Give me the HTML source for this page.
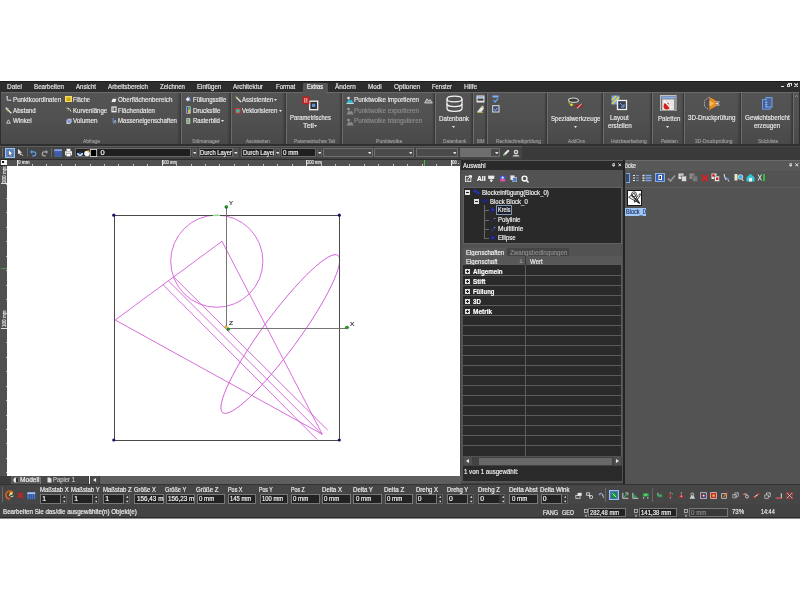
<!DOCTYPE html>
<html><head><meta charset="utf-8"><title>CAD</title>
<style>
html,body{margin:0;padding:0;background:#fff;}
body{width:800px;height:600px;position:relative;overflow:hidden;font-family:"Liberation Sans",sans-serif;}
#a div,#a span,#a svg{position:absolute;display:block;}
#a span{white-space:nowrap;line-height:1;-webkit-text-stroke:0.18px;}
#a{position:absolute;left:0;top:0;width:800px;height:600px;overflow:hidden;will-change:transform;}
</style></head><body><div id="a">
<div style="left:0px;top:81px;width:800px;height:437px;background:#454545;"></div>
<div style="left:0px;top:81px;width:800px;height:11px;background:#2d2d2d;"></div>
<div style="left:0px;top:81px;width:800px;height:1px;background:#1c1c1c;"></div>
<div style="left:302.5px;top:82.5px;width:25.5px;height:10px;background:#545454;border-radius:1.5px 1.5px 0 0;"></div>
<span style="left:7px;top:83.28px;font-size:7.2px;color:#e8e8e8;transform:scaleX(0.892);transform-origin:0 0;">Datei</span>
<span style="left:33.75px;top:83.28px;font-size:7.2px;color:#e8e8e8;transform:scaleX(0.861);transform-origin:0 0;">Bearbeiten</span>
<span style="left:75.75px;top:83.28px;font-size:7.2px;color:#e8e8e8;transform:scaleX(0.847);transform-origin:0 0;">Ansicht</span>
<span style="left:108px;top:83.28px;font-size:7.2px;color:#e8e8e8;transform:scaleX(0.869);transform-origin:0 0;">Arbeitsbereich</span>
<span style="left:160px;top:83.28px;font-size:7.2px;color:#e8e8e8;transform:scaleX(0.844);transform-origin:0 0;">Zeichnen</span>
<span style="left:197px;top:83.28px;font-size:7.2px;color:#e8e8e8;transform:scaleX(0.853);transform-origin:0 0;">Einfügen</span>
<span style="left:233.25px;top:83.28px;font-size:7.2px;color:#e8e8e8;transform:scaleX(0.872);transform-origin:0 0;">Architektur</span>
<span style="left:275.75px;top:83.28px;font-size:7.2px;color:#e8e8e8;transform:scaleX(0.844);transform-origin:0 0;">Format</span>
<span style="left:335px;top:83.28px;font-size:7.2px;color:#e8e8e8;transform:scaleX(0.894);transform-origin:0 0;">Ändern</span>
<span style="left:367.5px;top:83.28px;font-size:7.2px;color:#e8e8e8;transform:scaleX(0.881);transform-origin:0 0;">Modi</span>
<span style="left:393.75px;top:83.28px;font-size:7.2px;color:#e8e8e8;transform:scaleX(0.898);transform-origin:0 0;">Optionen</span>
<span style="left:431.75px;top:83.28px;font-size:7.2px;color:#e8e8e8;transform:scaleX(0.819);transform-origin:0 0;">Fenster</span>
<span style="left:463.75px;top:83.28px;font-size:7.2px;color:#e8e8e8;transform:scaleX(0.920);transform-origin:0 0;">Hilfe</span>
<div style="left:780.7px;top:85.7px;width:3.6px;height:1.7px;background:#e8e8e8;"></div>
<div style="left:786.8px;top:83.8px;width:3.6px;height:3.5px;background:transparent;border:1px solid #d8d8d8;box-sizing:border-box;"></div>
<div style="left:788px;top:82.8px;width:3.5px;height:3.5px;background:transparent;border:1px solid #d8d8d8;border-width:1px 1px 0 0;box-sizing:border-box;"></div>
<svg style="left:794px;top:83px" width="4.400" height="4.400"><path d="M.4.400l3.600 3.600M4 .4L.4 4" stroke="#f4f4f4" stroke-width="1.100"/></svg>
<div style="left:302.5px;top:82.5px;width:25.5px;height:10px;background:#545454;border-radius:1.5px 1.5px 0 0;"></div>
<span style="left:307px;top:83.28px;font-size:7.2px;color:#ffffff;transform:scaleX(0.784);transform-origin:0 0;">Extras</span>
<div style="left:0px;top:92px;width:800px;height:54.3px;background:#2f2f2f;"></div>
<div style="left:0.8px;top:92px;width:798.4px;height:52px;background:linear-gradient(#545454,#505050 55%,#494949);"></div>
<div style="left:0.8px;top:92px;width:798.4px;height:0.8px;background:#6a6a6a;"></div>
<div style="left:303.3px;top:91.5px;width:24px;height:1.4px;background:#545454;"></div>
<span style="left:82.5px;top:138.80px;font-size:5.8px;color:#9a9a9a;transform:scaleX(0.837);transform-origin:0 0;">Abfrage</span>
<div style="left:177.4px;top:92.8px;width:2.6px;height:51.2px;background:linear-gradient(90deg,rgba(0,0,0,0),rgba(0,0,0,0.22));"></div>
<div style="left:179.6px;top:92.8px;width:1px;height:51.2px;background:#393939;"></div>
<div style="left:180.6px;top:92.8px;width:0.8px;height:51.2px;background:#6c6c6c;"></div>
<span style="left:191.5px;top:138.80px;font-size:5.8px;color:#9a9a9a;transform:scaleX(0.889);transform-origin:0 0;">Stilmanager</span>
<div style="left:227.4px;top:92.8px;width:2.6px;height:51.2px;background:linear-gradient(90deg,rgba(0,0,0,0),rgba(0,0,0,0.22));"></div>
<div style="left:229.6px;top:92.8px;width:1px;height:51.2px;background:#393939;"></div>
<div style="left:230.6px;top:92.8px;width:0.8px;height:51.2px;background:#6c6c6c;"></div>
<span style="left:246.25px;top:138.80px;font-size:5.8px;color:#9a9a9a;transform:scaleX(0.792);transform-origin:0 0;">Assistenten</span>
<div style="left:282.4px;top:92.8px;width:2.6px;height:51.2px;background:linear-gradient(90deg,rgba(0,0,0,0),rgba(0,0,0,0.22));"></div>
<div style="left:284.6px;top:92.8px;width:1px;height:51.2px;background:#393939;"></div>
<div style="left:285.6px;top:92.8px;width:0.8px;height:51.2px;background:#6c6c6c;"></div>
<span style="left:293.75px;top:138.80px;font-size:5.8px;color:#9a9a9a;transform:scaleX(0.817);transform-origin:0 0;">Parametrisches Teil</span>
<div style="left:338.65px;top:92.8px;width:2.6px;height:51.2px;background:linear-gradient(90deg,rgba(0,0,0,0),rgba(0,0,0,0.22));"></div>
<div style="left:340.85px;top:92.8px;width:1px;height:51.2px;background:#393939;"></div>
<div style="left:341.85px;top:92.8px;width:0.8px;height:51.2px;background:#6c6c6c;"></div>
<span style="left:376.25px;top:138.80px;font-size:5.8px;color:#9a9a9a;transform:scaleX(0.885);transform-origin:0 0;">Punktwolke</span>
<div style="left:431.65px;top:92.8px;width:2.6px;height:51.2px;background:linear-gradient(90deg,rgba(0,0,0,0),rgba(0,0,0,0.22));"></div>
<div style="left:433.85px;top:92.8px;width:1px;height:51.2px;background:#393939;"></div>
<div style="left:434.85px;top:92.8px;width:0.8px;height:51.2px;background:#6c6c6c;"></div>
<span style="left:443px;top:138.80px;font-size:5.8px;color:#9a9a9a;transform:scaleX(0.829);transform-origin:0 0;">Datenbank</span>
<div style="left:469.9px;top:92.8px;width:2.6px;height:51.2px;background:linear-gradient(90deg,rgba(0,0,0,0),rgba(0,0,0,0.22));"></div>
<div style="left:472.1px;top:92.8px;width:1px;height:51.2px;background:#393939;"></div>
<div style="left:473.1px;top:92.8px;width:0.8px;height:51.2px;background:#6c6c6c;"></div>
<span style="left:477px;top:138.80px;font-size:5.8px;color:#9a9a9a;transform:scaleX(0.727);transform-origin:0 0;">BIM</span>
<div style="left:483.65px;top:92.8px;width:2.6px;height:51.2px;background:linear-gradient(90deg,rgba(0,0,0,0),rgba(0,0,0,0.22));"></div>
<div style="left:485.85px;top:92.8px;width:1px;height:51.2px;background:#393939;"></div>
<div style="left:486.85px;top:92.8px;width:0.8px;height:51.2px;background:#6c6c6c;"></div>
<span style="left:495.5px;top:138.80px;font-size:5.8px;color:#9a9a9a;transform:scaleX(0.841);transform-origin:0 0;">Rechtschreibprüfung</span>
<div style="left:543.65px;top:92.8px;width:2.6px;height:51.2px;background:linear-gradient(90deg,rgba(0,0,0,0),rgba(0,0,0,0.22));"></div>
<div style="left:545.85px;top:92.8px;width:1px;height:51.2px;background:#393939;"></div>
<div style="left:546.85px;top:92.8px;width:0.8px;height:51.2px;background:#6c6c6c;"></div>
<span style="left:567.5px;top:138.80px;font-size:5.8px;color:#9a9a9a;transform:scaleX(0.811);transform-origin:0 0;">AddOns</span>
<div style="left:599.9px;top:92.8px;width:2.6px;height:51.2px;background:linear-gradient(90deg,rgba(0,0,0,0),rgba(0,0,0,0.22));"></div>
<div style="left:602.1px;top:92.8px;width:1px;height:51.2px;background:#393939;"></div>
<div style="left:603.1px;top:92.8px;width:0.8px;height:51.2px;background:#6c6c6c;"></div>
<span style="left:611.25px;top:138.80px;font-size:5.8px;color:#9a9a9a;transform:scaleX(0.846);transform-origin:0 0;">Holzbearbeitung</span>
<div style="left:648.65px;top:92.8px;width:2.6px;height:51.2px;background:linear-gradient(90deg,rgba(0,0,0,0),rgba(0,0,0,0.22));"></div>
<div style="left:650.85px;top:92.8px;width:1px;height:51.2px;background:#393939;"></div>
<div style="left:651.85px;top:92.8px;width:0.8px;height:51.2px;background:#6c6c6c;"></div>
<span style="left:660.75px;top:138.80px;font-size:5.8px;color:#9a9a9a;transform:scaleX(0.787);transform-origin:0 0;">Paletten</span>
<div style="left:681.15px;top:92.8px;width:2.6px;height:51.2px;background:linear-gradient(90deg,rgba(0,0,0,0),rgba(0,0,0,0.22));"></div>
<div style="left:683.35px;top:92.8px;width:1px;height:51.2px;background:#393939;"></div>
<div style="left:684.35px;top:92.8px;width:0.8px;height:51.2px;background:#6c6c6c;"></div>
<span style="left:694.5px;top:138.80px;font-size:5.8px;color:#9a9a9a;transform:scaleX(0.849);transform-origin:0 0;">3D-Druckprüfung</span>
<div style="left:737.4px;top:92.8px;width:2.6px;height:51.2px;background:linear-gradient(90deg,rgba(0,0,0,0),rgba(0,0,0,0.22));"></div>
<div style="left:739.6px;top:92.8px;width:1px;height:51.2px;background:#393939;"></div>
<div style="left:740.6px;top:92.8px;width:0.8px;height:51.2px;background:#6c6c6c;"></div>
<span style="left:758px;top:138.80px;font-size:5.8px;color:#9a9a9a;transform:scaleX(0.806);transform-origin:0 0;">Stückliste</span>
<div style="left:789.9px;top:92.8px;width:2.6px;height:51.2px;background:linear-gradient(90deg,rgba(0,0,0,0),rgba(0,0,0,0.22));"></div>
<div style="left:792.1px;top:92.8px;width:1px;height:51.2px;background:#393939;"></div>
<div style="left:793.1px;top:92.8px;width:0.8px;height:51.2px;background:#6c6c6c;"></div>
<svg style="left:794.800px;top:94.500px" width="3" height="2"><path d="M0 2L1.500.3 3 2" stroke="#aaa" stroke-width=".6" fill="none"/></svg>
<span style="left:13px;top:95.78px;font-size:7.2px;color:#e8e8e8;transform:scaleX(0.861);transform-origin:0 0;">Punktkoordinaten</span>
<span style="left:13px;top:106.58px;font-size:7.2px;color:#e8e8e8;transform:scaleX(0.861);transform-origin:0 0;">Abstand</span>
<span style="left:13px;top:116.78px;font-size:7.2px;color:#e8e8e8;transform:scaleX(0.868);transform-origin:0 0;">Winkel</span>
<span style="left:72.5px;top:95.78px;font-size:7.2px;color:#e8e8e8;transform:scaleX(0.787);transform-origin:0 0;">Fläche</span>
<span style="left:72.5px;top:106.58px;font-size:7.2px;color:#e8e8e8;transform:scaleX(0.847);transform-origin:0 0;">Kurvenlänge</span>
<span style="left:72.5px;top:116.78px;font-size:7.2px;color:#e8e8e8;transform:scaleX(0.874);transform-origin:0 0;">Volumen</span>
<span style="left:118px;top:95.78px;font-size:7.2px;color:#e8e8e8;transform:scaleX(0.867);transform-origin:0 0;">Oberflächenbereich</span>
<span style="left:118px;top:106.58px;font-size:7.2px;color:#e8e8e8;transform:scaleX(0.848);transform-origin:0 0;">Flächendaten</span>
<span style="left:118px;top:116.78px;font-size:7.2px;color:#e8e8e8;transform:scaleX(0.842);transform-origin:0 0;">Masseneigenschaften</span>
<svg style="left:5.800px;top:96.200px" width="6" height="6"><path d="M1.200.6v3.600h3.200" stroke="#e0e4ee" stroke-width=".9" fill="none"/><rect x=".4" y=".2" width="1.500" height="1.200" fill="#c8d4f0"/><rect x="4" y="3.700" width="1.200" height="1.200" fill="#c8d4f0"/></svg>
<svg style="left:5.400px;top:106.600px" width="7" height="7"><path d="M.8.800l5.600 5.600" stroke="#ececdc" stroke-width="1.300"/><path d="M2.600.6l1.500 1.500" stroke="#5f8fe0" stroke-width="1"/><path d="M.6 2.200l3 3" stroke="#c8b040" stroke-width=".7"/></svg>
<svg style="left:6.200px;top:118.500px" width="5" height="5"><path d="M.6 4.300L2.400.8l1.900 3.500z" stroke="#dcdcdc" stroke-width=".8" fill="none"/></svg>
<div style="left:65.3px;top:96px;width:6.3px;height:6px;background:#e6c52e;border:0.6px solid #f4dc60;box-sizing:border-box;"></div>
<div style="left:67px;top:97.5px;width:3px;height:3px;background:#c9a41c;"></div>
<svg style="left:65.800px;top:106.600px" width="6" height="6"><path d="M.5 1.200c2-.5 3.500.8 4.500 3.300" stroke="#e4e4e4" stroke-width=".9" fill="none"/><path d="M1.500 3.500l1.800-1.200" stroke="#c8b040" stroke-width=".8"/></svg>
<svg style="left:65.800px;top:117.800px" width="6" height="7"><rect x=".6" y="2.500" width="3.300" height="3.300" fill="#eef0f6"/><path d="M.6 2.500l1.300-1.500h3.300v3.300l-1.300 1.500" fill="#8aa4e0" stroke="#dfe6f6" stroke-width=".5"/><rect x="1.600" y="3.400" width="1.300" height="1.300" fill="#667"/></svg>
<svg style="left:111px;top:98px" width="6" height="5"><path d="M.4 4.200L1.600.8h3.800L4.200 4.200z" fill="#f4f4f4"/><path d="M.4 4.700h3.500" stroke="#3a3a3a" stroke-width=".6"/></svg>
<svg style="left:110.800px;top:106.400px" width="6" height="7"><rect x=".4" y=".4" width="5.200" height="6" fill="#ececec"/><rect x="1.500" y="1.600" width="3" height="3.400" fill="#555"/><path d="M2.500 1.600v3.400" stroke="#ececec" stroke-width=".6"/></svg>
<svg style="left:111.800px;top:117.600px" width="5" height="6"><path d="M1.200.5v4.500h3" stroke="#6f8fd8" stroke-width="1" fill="none"/><path d="M2.300 4.200l.9-1.800.9 1.800" stroke="#e8e8e8" stroke-width=".7" fill="none"/><circle cx="1.300" cy=".9" r=".8" fill="#5f7fd0"/></svg>
<span style="left:192.5px;top:95.78px;font-size:7.2px;color:#e8e8e8;transform:scaleX(0.831);transform-origin:0 0;">Füllungsstile</span>
<span style="left:192.5px;top:106.58px;font-size:7.2px;color:#e8e8e8;transform:scaleX(0.870);transform-origin:0 0;">Druckstile</span>
<span style="left:192.5px;top:116.78px;font-size:7.2px;color:#e8e8e8;transform:scaleX(0.833);transform-origin:0 0;">Rasterbild</span>
<svg style="left:220.5px;top:120.2px" width="3" height="2"><path d="M0 0h3L1.5 2z" fill="#e8e8e8"/></svg>
<svg style="left:185.300px;top:96.200px" width="6" height="6"><path d="M.6 3.300l2.400-2.400 2.200 2.200-2.400 2.400z" fill="#e4e8f0"/><path d="M3 .6l2 1.200" stroke="#5f8fe0" stroke-width="1"/><circle cx="5" cy="4.300" r=".9" fill="#5fa0f0"/></svg>
<svg style="left:185.800px;top:106.200px" width="5" height="8"><rect x=".4" y=".4" width="4.200" height="7.200" fill="#d8dce8"/><rect x=".9" y="1" width="1.500" height="6" fill="#3a50c8"/><rect x="2.400" y="1" width="1.700" height="2.800" fill="#38a848"/><rect x="2.400" y="3.800" width="1.700" height="3.200" fill="#d8c838"/></svg>
<svg style="left:186px;top:117.800px" width="5" height="6"><rect x=".4" y=".3" width="3.800" height="5.400" fill="#e4ece4"/><rect x="1.200" y="1" width="2.200" height="4" fill="#5a9a62"/><path d="M1.200 3h2.200" stroke="#e4ece4" stroke-width=".5"/></svg>
<span style="left:242px;top:95.78px;font-size:7.2px;color:#e8e8e8;transform:scaleX(0.840);transform-origin:0 0;">Assistenten</span>
<svg style="left:274.25px;top:99.2px" width="3" height="2"><path d="M0 0h3L1.5 2z" fill="#e8e8e8"/></svg>
<span style="left:242px;top:106.58px;font-size:7.2px;color:#e8e8e8;transform:scaleX(0.853);transform-origin:0 0;">Vektorisieren</span>
<svg style="left:278.5px;top:110px" width="3" height="2"><path d="M0 0h3L1.5 2z" fill="#e8e8e8"/></svg>
<svg style="left:234.800px;top:95.800px" width="7" height="7"><path d="M1.500 1.500l4.500 4.500" stroke="#ececec" stroke-width="1.300"/><path d="M.5 1.200l1.600.6M1.300.3l.5 1.700" stroke="#e8c848" stroke-width=".7"/></svg>
<svg style="left:235px;top:107.500px" width="6" height="6"><rect x=".6" y=".6" width="4.600" height="4.600" fill="#48b8a0" stroke="#c83030" stroke-width="1.100"/></svg>
<svg style="left:302px;top:95.500px" width="17" height="15"><rect x="7.700" y="5.200" width="8" height="8.500" fill="#333" stroke="#f2f2f2" stroke-width="1.300"/><rect x="10" y="7.800" width="3.200" height="3.200" fill="#5f8fe0"/><rect x=".6" y=".5" width="6.800" height="7.800" fill="#c41e1e"/><path d="M2.800 2v4.800M4.800 2v4.800" stroke="#f4d4d4" stroke-width=".9"/></svg>
<span style="left:289.5px;top:114.38px;font-size:7.2px;color:#e8e8e8;transform:scaleX(0.820);transform-origin:0 0;">Parametrisches</span>
<span style="left:302.5px;top:121.98px;font-size:7.2px;color:#e8e8e8;transform:scaleX(1.018);transform-origin:0 0;">Teil</span>
<svg style="left:314.3px;top:125.3px" width="3" height="2"><path d="M0 0h3L1.5 2z" fill="#e8e8e8"/></svg>
<span style="left:353.75px;top:95.78px;font-size:7.2px;color:#e8e8e8;transform:scaleX(0.869);transform-origin:0 0;">Punktwolke importieren</span>
<span style="left:353.75px;top:106.58px;font-size:7.2px;color:#8c8c8c;transform:scaleX(0.869);transform-origin:0 0;">Punktwolke exportieren</span>
<span style="left:353.75px;top:116.78px;font-size:7.2px;color:#8c8c8c;transform:scaleX(0.870);transform-origin:0 0;">Punktwolke triangulieren</span>
<svg style="left:345.5px;top:95.5px" width="8" height="8"><path d="M.5 7.5L3 3l1.5 2 1.2-1.5 2 4z" fill="#30c0d8"/><circle cx="2.5" cy="2" r="1.3" fill="#e8e8e8"/><path d="M.5 7.5h7.2" stroke="#e8e8e8" stroke-width=".8"/></svg>
<svg style="left:345.5px;top:106.5px" width="8" height="8"><path d="M.5 7.5L3 3l1.5 2 1.2-1.5 2 4z" fill="#888"/><circle cx="2.5" cy="2" r="1.3" fill="#999"/></svg>
<svg style="left:345.5px;top:117.5px" width="8" height="8"><path d="M.5 7.5L3 3l1.5 2 1.2-1.5 2 4z" fill="#888"/><circle cx="2.5" cy="2" r="1.3" fill="#999"/></svg>
<svg style="left:424px;top:95.500px" width="9" height="8"><path d="M.6 7L3 2.800l1.800 2.200 1.200-1.400 2.400 3.400z" fill="#8a8a8a" stroke="#d8d8d8" stroke-width=".8"/></svg>
<svg style="left:444.5px;top:94.5px" width="19" height="18"><g fill="none" stroke="#f2f2f2" stroke-width="1.250"><ellipse cx="9.5" cy="4" rx="7.5" ry="2.8"/><path d="M2 4v9.5c0 1.6 3.4 2.9 7.5 2.9s7.500-1.3 7.500-2.900V4"/><path d="M2 8.7c0 1.600 3.4 2.900 7.5 2.900s7.500-1.300 7.500-2.900"/></g></svg>
<span style="left:438.75px;top:115.18px;font-size:7.2px;color:#e8e8e8;transform:scaleX(0.861);transform-origin:0 0;">Datenbank</span>
<svg style="left:452px;top:126.3px" width="3" height="2"><path d="M0 0h3L1.5 2z" fill="#e8e8e8"/></svg>
<svg style="left:476px;top:95px" width="9" height="8"><rect x=".5" y=".5" width="8" height="7" fill="#e8e8e8"/><rect x="1.5" y="3.5" width="6" height="2.2" fill="#444"/><rect x="1.5" y="1.3" width="6" height="1.2" fill="#7a9ad8"/></svg>
<svg style="left:476px;top:105px" width="9" height="8"><path d="M1 7l4-5 3 1.500-3 4z" fill="#e8e8e8"/><path d="M1 7.3h6" stroke="#c8b040" stroke-width="1"/><circle cx="6.5" cy="2" r="1.2" fill="#d8d8a0"/></svg>
<svg style="left:492px;top:95px" width="8" height="8"><path d="M.5 1.500h6" stroke="#7fb0ff" stroke-width="2"/><path d="M1.5 5.200l1.600 1.800 3-3.500" stroke="#5f9fe8" stroke-width="1.300" fill="none"/></svg>
<svg style="left:492px;top:105px" width="8" height="8"><rect x=".7" y=".7" width="6.300" height="6.300" fill="#3c4a68" stroke="#e0e0e0" stroke-width="1"/><path d="M2.200 4l1.300 1.500 2-2.600" stroke="#8fc0ff" stroke-width="1" fill="none"/></svg>
<svg style="left:567px;top:95.500px" width="19" height="15"><ellipse cx="6.500" cy="4.200" rx="5" ry="2.200" fill="#3c3c3c" stroke="#cfcfcf" stroke-width="1.100"/><path d="M2 5.500c0 2 .8 3 2 3.400" stroke="#d8c020" stroke-width="1" fill="none"/><circle cx="4.600" cy="8.800" r="1.300" fill="#f0dc28"/><path d="M7 11l3.800-2.600 6.200.3-4 3.300z" fill="#a82424"/><path d="M10 12.300l4.600-4.300" stroke="#f4f4f4" stroke-width=".9"/></svg>
<span style="left:550.75px;top:114.68px;font-size:7.2px;color:#e8e8e8;transform:scaleX(0.847);transform-origin:0 0;">Spezialwerkzeuge</span>
<svg style="left:574px;top:126.3px" width="3" height="2"><path d="M0 0h3L1.5 2z" fill="#e8e8e8"/></svg>
<svg style="left:611px;top:95px" width="17" height="16"><rect x=".5" y=".5" width="8" height="9" fill="#6fa0e8"/><path d="M1 5l4-4M1 9l7-7" stroke="#e8d840" stroke-width="1.600"/><rect x="6.500" y="5.500" width="9" height="9" fill="#3a4250" stroke="#f0f0f0" stroke-width="1.300"/><path d="M9 8l4 4M13 9v3h-3" stroke="#6fa0e8" stroke-width="1" fill="none"/></svg>
<span style="left:609.5px;top:114.38px;font-size:7.2px;color:#e8e8e8;transform:scaleX(0.867);transform-origin:0 0;">Layout</span>
<span style="left:607.5px;top:121.98px;font-size:7.2px;color:#e8e8e8;transform:scaleX(0.873);transform-origin:0 0;">erstellen</span>
<svg style="left:660.300px;top:94.500px" width="16.500" height="16.500" viewBox="0 0 17 17"><rect x=".5" y=".5" width="16" height="16" fill="#707070" stroke="#c4c4c4" stroke-width="1"/><rect x="1.500" y="1.500" width="14" height="2.200" fill="#8ab0f0"/><rect x="2.300" y="4.500" width="12.400" height="11" fill="#e4e4e4"/><ellipse cx="7" cy="11.500" rx="3.200" ry="3.400" fill="#d81c1c"/><path d="M4 6l4.500 4.500" stroke="#f8f8f8" stroke-width="1.600"/><path d="M12.800 5.200l-4.300 6.800" stroke="#fafafa" stroke-width="1.800"/><path d="M12.800 5.200l-4.300 6.800" stroke="#b0b0b0" stroke-width=".5"/><rect x="9.500" y="11" width="2.600" height="2.600" fill="#f4f4f4"/></svg>
<span style="left:657.5px;top:115.18px;font-size:7.2px;color:#e8e8e8;transform:scaleX(0.852);transform-origin:0 0;">Paletten</span>
<svg style="left:666.2px;top:126.3px" width="3" height="2"><path d="M0 0h3L1.5 2z" fill="#e8e8e8"/></svg>
<svg style="left:703px;top:95.5px" width="17" height="15"><path d="M6.500 1v13l7-4V5z" fill="#e88a20"/><path d="M6.500 1L1.500 4.500v6l5 3.500" fill="none" stroke="#c8c8c8" stroke-width=".8" stroke-dasharray="1.500 1"/><path d="M13.500 6h3M13.500 9h3M13 7.500h2.500" stroke="#f0f0f0" stroke-width=".9"/><path d="M6.500 4.500l5 3-5 3" fill="#f4b860"/></svg>
<span style="left:687.5px;top:113.98px;font-size:7.2px;color:#e8e8e8;transform:scaleX(0.866);transform-origin:0 0;">3D-Druckprüfung</span>
<svg style="left:762px;top:96.5px" width="11" height="13"><rect x=".6" y="2.600" width="7.500" height="9.500" fill="#3a5080" stroke="#6f9fe8" stroke-width="1.100"/><rect x="4" y=".6" width="6" height="9.500" fill="#4a6498" stroke="#6f9fe8" stroke-width="1.100"/><path d="M2.500 5.500h3M2.500 7.500h3M2.500 9.500h3" stroke="#8fb8f8" stroke-width=".7"/></svg>
<span style="left:744.5px;top:114.38px;font-size:7.2px;color:#e8e8e8;transform:scaleX(0.874);transform-origin:0 0;">Gewichtsbericht</span>
<span style="left:753.75px;top:121.98px;font-size:7.2px;color:#e8e8e8;transform:scaleX(0.874);transform-origin:0 0;">erzeugen</span>
<div style="left:0px;top:146px;width:800px;height:13px;background:#3a3a3a;"></div>
<div style="left:0px;top:146px;width:522px;height:13px;background:#444444;"></div>
<div style="left:0px;top:146.2px;width:522px;height:0.8px;background:#5e5e5e;"></div>
<div style="left:522px;top:146.2px;width:278px;height:0.8px;background:#454545;"></div>
<div style="left:1.5px;top:148px;width:1px;height:9px;background:#6a6a6a;"></div>
<div style="left:5px;top:147.6px;width:9.7px;height:10.2px;background:#5a86c8;border:0.6px solid #9cc0f0;box-sizing:border-box;"></div>
<svg style="left:6.800px;top:148.800px" width="7" height="8"><path d="M1.500.8v6l1.500-1.300 1.100 2.200 1-.5-1.100-2.100h2z" fill="#fff" stroke="#223" stroke-width=".4"/></svg>
<svg style="left:16.300px;top:148.300px" width="8" height="9"><path d="M2 .8v5.500l1.300-1.100 1 2 .9-.4-1-2h1.800z" fill="#e8e8e8"/><path d="M5 5.500l2 2.500" stroke="#bbb" stroke-width="1"/></svg>
<div style="left:27px;top:148px;width:0.7px;height:9px;background:#666;"></div>
<svg style="left:29.200px;top:149.300px" width="8" height="7.500" viewBox="0 0 9 9"><path d="M2 3.500h3.500a2.300 2.300 0 0 1 0 4.600H3.500" fill="none" stroke="#5f9fe8" stroke-width="1.500"/><path d="M3.500 1L.8 3.500l2.700 2.500z" fill="#5f9fe8"/></svg>
<svg style="left:40.800px;top:149.300px" width="8" height="7.500" viewBox="0 0 9 9"><path d="M7 3.500H3.500a2.300 2.300 0 0 0 0 4.600H5.500" fill="none" stroke="#a4a4a4" stroke-width="1.500"/><path d="M5.500 1l2.700 2.500-2.700 2.500z" fill="#a4a4a4"/></svg>
<div style="left:51px;top:148px;width:0.7px;height:9px;background:#666;"></div>
<svg style="left:53.600px;top:148.800px" width="8.500" height="8"><rect x=".3" y=".3" width="7.900" height="7.400" fill="#4a6cb4"/><rect x=".3" y=".3" width="7.900" height="2" fill="#86a6e0"/><path d="M.3 4.200h7.900M.3 6h7.900" stroke="#2c4684" stroke-width=".7"/><path d="M.3 2.500h7.900" stroke="#2c4684" stroke-width=".5"/></svg>
<svg style="left:63.900px;top:148px" width="9" height="9"><rect x="1" y="3" width="7" height="4.500" rx=".8" fill="#e8e8e8"/><rect x="2.500" y=".8" width="4" height="2.500" fill="#f8f8f8" stroke="#888" stroke-width=".4"/><rect x="2.500" y="5.500" width="4" height="3" fill="#fff" stroke="#666" stroke-width=".4"/></svg>
<div style="left:74.5px;top:147.9px;width:116.75px;height:9.1px;background:#1f1f1f;border:0.7px solid #6a6a6a;box-sizing:border-box;"></div>
<div style="left:191.55px;top:147.9px;width:5.6px;height:9.1px;background:#474747;border:0.6px solid #5c5c5c;box-sizing:border-box;"></div>
<svg style="left:192.75px;top:151.700px" width="3.600" height="2.400"><path d="M0 0h3.600L1.800 2.400z" fill="#e0e0e0"/></svg>
<svg style="left:76px;top:148.500px" width="22" height="8"><path d="M1 4a3 3 0 0 0 6 0" fill="#d8e4ff"/><circle cx="4" cy="4.300" r="1.300" fill="#2a4a9a"/><circle cx="11" cy="4.500" r="2.800" fill="#f4f4f4"/><circle cx="12.300" cy="2.300" r="1.100" fill="#e8c040"/><rect x="14.300" y=".5" width="6.400" height="7" fill="#000" stroke="#e8e8e8" stroke-width=".8"/></svg>
<span style="left:100.5px;top:148.80px;font-size:7.5px;color:#f4f4f4;">0</span>
<div style="left:198.5px;top:147.9px;width:34px;height:9.1px;background:#1f1f1f;border:0.7px solid #6a6a6a;box-sizing:border-box;"></div>
<div style="left:232.8px;top:147.9px;width:5.6px;height:9.1px;background:#474747;border:0.6px solid #5c5c5c;box-sizing:border-box;"></div>
<svg style="left:234px;top:151.700px" width="3.600" height="2.400"><path d="M0 0h3.600L1.800 2.400z" fill="#e0e0e0"/></svg>
<div style="left:199.2px;top:148px;width:32.6px;height:9px;overflow:hidden;">
<span style="left:1px;top:0.80px;font-size:7.5px;color:#f4f4f4;transform:scaleX(0.783);transform-origin:0 0;">Durch Layer</span>
</div>
<div style="left:241.25px;top:147.9px;width:33px;height:9.1px;background:#1f1f1f;border:0.7px solid #6a6a6a;box-sizing:border-box;"></div>
<div style="left:274.55px;top:147.9px;width:5.6px;height:9.1px;background:#474747;border:0.6px solid #5c5c5c;box-sizing:border-box;"></div>
<svg style="left:275.75px;top:151.700px" width="3.600" height="2.400"><path d="M0 0h3.600L1.800 2.400z" fill="#e0e0e0"/></svg>
<div style="left:241.95px;top:148px;width:31.6px;height:9px;overflow:hidden;">
<span style="left:1px;top:0.80px;font-size:7.5px;color:#f4f4f4;transform:scaleX(0.783);transform-origin:0 0;">Durch Layer</span>
</div>
<div style="left:281.25px;top:147.9px;width:35px;height:9.1px;background:#1f1f1f;border:0.7px solid #6a6a6a;box-sizing:border-box;"></div>
<div style="left:316.55px;top:147.9px;width:5.6px;height:9.1px;background:#474747;border:0.6px solid #5c5c5c;box-sizing:border-box;"></div>
<svg style="left:317.75px;top:151.700px" width="3.600" height="2.400"><path d="M0 0h3.600L1.800 2.400z" fill="#e0e0e0"/></svg>
<div style="left:281.95px;top:148px;width:33.6px;height:9px;overflow:hidden;">
<span style="left:1px;top:0.80px;font-size:7.5px;color:#f4f4f4;transform:scaleX(0.827);transform-origin:0 0;">0 mm</span>
</div>
<div style="left:323.25px;top:147.9px;width:49.25px;height:9.1px;background:#4a4a4a;border:0.7px solid #707070;box-sizing:border-box;"></div>
<svg style="left:367.5px;top:151.700px" width="3.600" height="2.400"><path d="M0 0h3.600L1.800 2.400z" fill="#e0e0e0"/></svg>
<div style="left:373.75px;top:147.9px;width:40px;height:9.1px;background:#4a4a4a;border:0.7px solid #707070;box-sizing:border-box;"></div>
<svg style="left:408.75px;top:151.700px" width="3.600" height="2.400"><path d="M0 0h3.600L1.800 2.400z" fill="#e0e0e0"/></svg>
<div style="left:416.25px;top:147.9px;width:41.25px;height:9.1px;background:#4a4a4a;border:0.7px solid #707070;box-sizing:border-box;"></div>
<svg style="left:452.5px;top:151.700px" width="3.600" height="2.400"><path d="M0 0h3.600L1.800 2.400z" fill="#e0e0e0"/></svg>
<div style="left:459.5px;top:147.9px;width:40.5px;height:9.1px;background:#4a4a4a;border:0.7px solid #707070;box-sizing:border-box;"></div>
<svg style="left:495px;top:151.700px" width="3.600" height="2.400"><path d="M0 0h3.600L1.800 2.400z" fill="#e0e0e0"/></svg>
<div style="left:460.2px;top:148.6px;width:31px;height:7.7px;background:#6e6e6e;"></div>
<svg style="left:502px;top:148.500px" width="8" height="8"><path d="M1 7l1-2.500 4-4 1.500 1.500-4 4z" fill="#e8e8e8"/><path d="M1 7l1-2.500 1.500 1.500z" fill="#40b040"/></svg>
<svg style="left:511.500px;top:148.500px" width="8" height="8"><circle cx="4" cy="3" r="2.300" fill="#d8d8d8"/><path d="M.5 7.500c0-2.500 7-2.500 7 0z" fill="#c8c8c8"/><circle cx="4" cy="3" r="1" fill="#555"/></svg>
<div style="left:0px;top:159px;width:461px;height:7px;background:#505050;"></div>
<div style="left:0px;top:158.8px;width:461px;height:1px;background:#2c2c2c;"></div>
<div style="left:0px;top:166px;width:7.3px;height:310px;background:#505050;"></div>
<div style="left:0px;top:165.3px;width:7px;height:0.8px;background:#2a2a2a;"></div>
<div style="left:7.3px;top:166px;width:453px;height:309.7px;background:#ffffff;"></div>
<div style="left:1px;top:160px;width:5.7px;height:5.2px;background:#f4f4f4;"></div>
<div style="left:2px;top:161px;width:1.9px;height:2.1px;background:#111;"></div>
<div style="left:17.3px;top:159.8px;width:0.7px;height:6.1px;background:#e0e0e0;"></div>
<div style="left:31.74px;top:164.2px;width:0.7px;height:1.7px;background:#c4c4c4;"></div>
<div style="left:46.18px;top:164.2px;width:0.7px;height:1.7px;background:#c4c4c4;"></div>
<div style="left:60.62px;top:164.2px;width:0.7px;height:1.7px;background:#c4c4c4;"></div>
<div style="left:75.06px;top:164.2px;width:0.7px;height:1.7px;background:#c4c4c4;"></div>
<div style="left:89.5px;top:164.2px;width:0.7px;height:1.7px;background:#c4c4c4;"></div>
<div style="left:103.94px;top:164.2px;width:0.7px;height:1.7px;background:#c4c4c4;"></div>
<div style="left:118.38px;top:164.2px;width:0.7px;height:1.7px;background:#c4c4c4;"></div>
<div style="left:132.82px;top:164.2px;width:0.7px;height:1.7px;background:#c4c4c4;"></div>
<div style="left:147.26px;top:164.2px;width:0.7px;height:1.7px;background:#c4c4c4;"></div>
<div style="left:161.7px;top:159.8px;width:0.7px;height:6.1px;background:#e0e0e0;"></div>
<div style="left:176.14px;top:164.2px;width:0.7px;height:1.7px;background:#c4c4c4;"></div>
<div style="left:190.58px;top:164.2px;width:0.7px;height:1.7px;background:#c4c4c4;"></div>
<div style="left:205.02px;top:164.2px;width:0.7px;height:1.7px;background:#c4c4c4;"></div>
<div style="left:219.46px;top:164.2px;width:0.7px;height:1.7px;background:#c4c4c4;"></div>
<div style="left:233.9px;top:164.2px;width:0.7px;height:1.7px;background:#c4c4c4;"></div>
<div style="left:248.34px;top:164.2px;width:0.7px;height:1.7px;background:#c4c4c4;"></div>
<div style="left:262.78px;top:164.2px;width:0.7px;height:1.7px;background:#c4c4c4;"></div>
<div style="left:277.22px;top:164.2px;width:0.7px;height:1.7px;background:#c4c4c4;"></div>
<div style="left:291.66px;top:164.2px;width:0.7px;height:1.7px;background:#c4c4c4;"></div>
<div style="left:306.1px;top:159.8px;width:0.7px;height:6.1px;background:#e0e0e0;"></div>
<div style="left:320.54px;top:164.2px;width:0.7px;height:1.7px;background:#c4c4c4;"></div>
<div style="left:334.98px;top:164.2px;width:0.7px;height:1.7px;background:#c4c4c4;"></div>
<div style="left:349.42px;top:164.2px;width:0.7px;height:1.7px;background:#c4c4c4;"></div>
<div style="left:363.86px;top:164.2px;width:0.7px;height:1.7px;background:#c4c4c4;"></div>
<div style="left:378.3px;top:164.2px;width:0.7px;height:1.7px;background:#c4c4c4;"></div>
<div style="left:392.74px;top:164.2px;width:0.7px;height:1.7px;background:#c4c4c4;"></div>
<div style="left:407.18px;top:164.2px;width:0.7px;height:1.7px;background:#c4c4c4;"></div>
<div style="left:421.62px;top:164.2px;width:0.7px;height:1.7px;background:#c4c4c4;"></div>
<div style="left:436.06px;top:164.2px;width:0.7px;height:1.7px;background:#c4c4c4;"></div>
<div style="left:450.5px;top:159.8px;width:0.7px;height:6.1px;background:#e0e0e0;"></div>
<span style="left:18.3px;top:160.98px;font-size:4.8px;color:#e4e4e4;transform:scaleX(0.958);transform-origin:0 0;">0 mm</span>
<span style="left:162.4px;top:160.98px;font-size:4.8px;color:#e4e4e4;transform:scaleX(0.865);transform-origin:0 0;">100 mm</span>
<span style="left:306.8px;top:160.98px;font-size:4.8px;color:#e4e4e4;transform:scaleX(0.865);transform-origin:0 0;">200 mm</span>
<span style="left:450.7px;top:160.98px;font-size:4.8px;color:#e4e4e4;transform:scaleX(0.700);transform-origin:0 0;">300</span>
<div style="left:457.6px;top:162.7px;width:1px;height:1px;background:#d0d0d0;"></div>
<div style="left:5.6px;top:169.06px;width:1.7px;height:0.7px;background:#c4c4c4;"></div>
<div style="left:5.6px;top:183.5px;width:1.7px;height:0.7px;background:#c4c4c4;"></div>
<div style="left:5.6px;top:197.94px;width:1.7px;height:0.7px;background:#c4c4c4;"></div>
<div style="left:5.6px;top:212.38px;width:1.7px;height:0.7px;background:#c4c4c4;"></div>
<div style="left:5.6px;top:226.82px;width:1.7px;height:0.7px;background:#c4c4c4;"></div>
<div style="left:5.6px;top:241.26px;width:1.7px;height:0.7px;background:#c4c4c4;"></div>
<div style="left:5.6px;top:255.7px;width:1.7px;height:0.7px;background:#c4c4c4;"></div>
<div style="left:5.6px;top:270.14px;width:1.7px;height:0.7px;background:#c4c4c4;"></div>
<div style="left:5.6px;top:284.58px;width:1.7px;height:0.7px;background:#c4c4c4;"></div>
<div style="left:5.6px;top:299.02px;width:1.7px;height:0.7px;background:#c4c4c4;"></div>
<div style="left:5.6px;top:313.46px;width:1.7px;height:0.7px;background:#c4c4c4;"></div>
<div style="left:5.6px;top:327.9px;width:1.7px;height:0.7px;background:#c4c4c4;"></div>
<div style="left:5.6px;top:342.34px;width:1.7px;height:0.7px;background:#c4c4c4;"></div>
<div style="left:5.6px;top:356.78px;width:1.7px;height:0.7px;background:#c4c4c4;"></div>
<div style="left:5.6px;top:371.22px;width:1.7px;height:0.7px;background:#c4c4c4;"></div>
<div style="left:5.6px;top:385.66px;width:1.7px;height:0.7px;background:#c4c4c4;"></div>
<div style="left:5.6px;top:400.1px;width:1.7px;height:0.7px;background:#c4c4c4;"></div>
<div style="left:5.6px;top:414.54px;width:1.7px;height:0.7px;background:#c4c4c4;"></div>
<div style="left:5.6px;top:428.98px;width:1.7px;height:0.7px;background:#c4c4c4;"></div>
<div style="left:5.6px;top:443.42px;width:1.7px;height:0.7px;background:#c4c4c4;"></div>
<div style="left:5.6px;top:457.86px;width:1.7px;height:0.7px;background:#c4c4c4;"></div>
<div style="left:5.6px;top:472.3px;width:1.7px;height:0.7px;background:#c4c4c4;"></div>
<span style="left:2.900px;top:183px;font-size:4.600px;color:#e0e0e0;transform:rotate(-90deg);transform-origin:0 0;">200 mm</span>
<span style="left:2.900px;top:327.400px;font-size:4.600px;color:#e0e0e0;transform:rotate(-90deg);transform-origin:0 0;">100 mm</span>
<div style="left:0.6px;top:183.3px;width:6.7px;height:0.7px;background:#e0e0e0;"></div>
<div style="left:0.6px;top:327.7px;width:6.7px;height:0.7px;background:#e0e0e0;"></div>
<svg style="left:0;top:0" width="800" height="600" viewBox="0 0 800 600" fill="none">
<g stroke="#d45ed8" stroke-width="0.900">
<circle cx="216.800" cy="261.200" r="46.100"/>
<path d="M115.200 320 L222 241.300 L322.300 434.300 Z"/>
<path d="M163.300 285 L317.200 439.500 M168.300 280.800 L321.900 434.200 M173.500 276.800 L327.700 430.100"/>
<ellipse cx="280.300" cy="334" rx="97.500" ry="18" transform="rotate(-53.800 280.300 334)"/>
</g>
<g stroke="#4a4a4a" stroke-width="1" shape-rendering="crispEdges">
<rect x="114.500" y="215.500" width="225" height="224.500"/>
</g>
<g stroke="#757575" stroke-width="1" shape-rendering="crispEdges">
<path d="M226.500 208 V326 M229.500 328.500 H345.500"/>
</g>
<path d="M213 215.500h7" stroke="#86e886" stroke-width="1.200"/>
<g fill="#14146e"><circle cx="113.800" cy="215.200" r="1.600"/><circle cx="339.300" cy="215.200" r="1.600"/><circle cx="113.800" cy="440" r="1.600"/><circle cx="339.300" cy="440" r="1.600"/></g>
<g fill="#1a9a1a" stroke="#0a5a0a" stroke-width=".5"><circle cx="226.300" cy="206.900" r="1.500"/><ellipse cx="347" cy="327.500" rx="1.700" ry="1.300"/><circle cx="228.300" cy="329.200" r="1.400"/></g>
<circle cx="226" cy="327" r="1.300" fill="#f0d020" stroke="#a07000" stroke-width=".4"/>
</svg>
<span style="left:228.6px;top:200.57px;font-size:5px;color:#3c3c44;transform:scaleX(1.200);transform-origin:0 0;">Y</span>
<span style="left:229.3px;top:321.22px;font-size:5.6px;color:#3c3c44;transform:scaleX(1.200);transform-origin:0 0;">Z</span>
<span style="left:349.8px;top:321.52px;font-size:5.6px;color:#3c3c44;transform:scaleX(1.178);transform-origin:0 0;">X</span>
<div style="left:0px;top:475.7px;width:461px;height:8.5px;background:#3c3c3c;"></div>
<div style="left:100px;top:476px;width:361px;height:8px;background:#5e5e5e;"></div>
<div style="left:10.8px;top:476px;width:29px;height:8px;background:#5a5a5a;"></div>
<div style="left:41px;top:476px;width:47px;height:8px;background:#484848;"></div>
<div style="left:40px;top:476.5px;width:0.8px;height:7px;background:#777;"></div>
<svg style="left:12.5px;top:477.200px" width="6" height="6"><circle cx="3" cy="3" r="2.600" fill="#e8e8e8"/><path d="M3 .4a2.600 2.600 0 0 1 0 5.200z" fill="#333"/></svg>
<span style="left:19.5px;top:476.48px;font-size:7.2px;color:#f2f2f2;transform:scaleX(0.919);transform-origin:0 0;">Modell</span>
<svg style="left:46.500px;top:477.200px" width="5" height="6"><path d="M.5.5h2.600l1.400 1.400v3.600h-4z" fill="#e0e0e0"/></svg>
<span style="left:52.5px;top:476.48px;font-size:7.2px;color:#c8c8c8;transform:scaleX(0.820);transform-origin:0 0;">Papier 1</span>
<div style="left:88.5px;top:475.7px;width:1.2px;height:8.5px;background:#f2f2f2;"></div>
<div style="left:90.5px;top:476px;width:8.5px;height:8px;background:#4a4a4a;"></div>
<svg style="left:93px;top:478.300px" width="3" height="4"><path d="M3 0v4L0 2z" fill="#e8e8e8"/></svg>
<div style="left:461px;top:159px;width:339px;height:325px;background:#3c3c3c;"></div>
<div style="left:461px;top:160.5px;width:162.5px;height:322.5px;background:#525252;"></div>
<div style="left:461px;top:160.3px;width:162.5px;height:9.4px;background:#2a2a2a;"></div>
<div style="left:480px;top:159.7px;width:144px;height:0.8px;background:#5c5c5c;"></div>
<div style="left:623.3px;top:160px;width:1.3px;height:323.5px;background:#242424;"></div>
<span style="left:462.5px;top:161.76px;font-size:7.4px;color:#f0f0f0;transform:scaleX(0.804);transform-origin:0 0;">Auswahl</span>
<svg style="left:611.500px;top:162.800px" width="3.400" height="4.400"><path d="M.9.400h1.600v2h-1.600zM0 2.400h3.400M1.700 2.400v1.900" stroke="#e8e8e8" stroke-width=".7" fill="none"/></svg>
<svg style="left:617.800px;top:163.200px" width="3.600" height="3.600"><path d="M.3.300l3 3M3.300.3l-3 3" stroke="#f0f0f0" stroke-width=".9"/></svg>
<svg style="left:464.8px;top:175px" width="7.38" height="7.38" viewBox="0 0 9 9"><rect x=".6" y="1.600" width="6.500" height="6.500" fill="none" stroke="#e8e8e8" stroke-width="1.100"/><path d="M3 5.500l4.500-4.500M5 .8h2.800v2.800" stroke="#fff" stroke-width="1.100" fill="none"/><rect x="2" y="4.500" width="2.500" height="2.500" fill="#aaa"/></svg>
<span style="left:476.5px;top:174.69px;font-size:7px;color:#ffffff;transform:scaleX(0.950);transform-origin:0 0;font-weight:bold;">All</span>
<svg style="left:488px;top:175px" width="6.56" height="7.38" viewBox="0 0 8 9"><path d="M.8.8v3.500h6.400V.8M2.900.8v3.500M5.100.8v3.500M4 4.300v2M2.500 6.300h3L4 8.500z" stroke="#f0f0f0" stroke-width="1" fill="#f0f0f0"/></svg>
<svg style="left:498.5px;top:175px" width="7.38" height="7.38" viewBox="0 0 9 9"><ellipse cx="4.500" cy="3.500" rx="4" ry="3" fill="#3a5ac8"/><ellipse cx="4.500" cy="6.300" rx="3.500" ry="1.800" fill="#e050a0"/><circle cx="4.500" cy="3.300" r="1.400" fill="#e8e8f8"/></svg>
<svg style="left:510px;top:175px" width="7.38" height="7.38" viewBox="0 0 9 9"><rect x=".5" y=".5" width="5" height="5.500" fill="#e8e8e8"/><rect x="3.500" y="3" width="5" height="5.500" fill="#4a78c8" stroke="#e8e8e8" stroke-width=".7"/></svg>
<svg style="left:521px;top:174.8px" width="8.20" height="8.20" viewBox="0 0 10 10"><circle cx="4.300" cy="4.300" r="3" fill="none" stroke="#ffffff" stroke-width="1.600"/><path d="M6.500 6.500l2.700 2.700" stroke="#ffffff" stroke-width="1.700"/></svg>
<div style="left:463px;top:186.5px;width:158.5px;height:57.5px;background:#292929;border:0.7px solid #606060;box-sizing:border-box;"></div>
<div style="left:465px;top:190px;width:5px;height:5px;background:#e2e2e2;"></div>
<div style="left:466px;top:192px;width:3px;height:1px;background:#222;"></div>
<svg style="left:472.500px;top:188.700px" width="7" height="6"><path d="M1 1h2v2h-2zM4 3h2v2h-2zM3 2l1 1" stroke="#2432b8" stroke-width=".9" fill="#2432b8"/></svg>
<span style="left:482px;top:188.88px;font-size:7.2px;color:#f0f0f0;transform:scaleX(0.841);transform-origin:0 0;">Blockeinfügung(Block_0)</span>
<div style="left:474px;top:199px;width:5px;height:5px;background:#e2e2e2;"></div>
<div style="left:475px;top:201px;width:3px;height:1px;background:#222;"></div>
<svg style="left:481.500px;top:198.300px" width="6" height="6"><circle cx="2.800" cy="2.800" r="2.100" fill="#1a2498"/></svg>
<span style="left:489.8px;top:197.68px;font-size:7.2px;color:#f0f0f0;transform:scaleX(0.836);transform-origin:0 0;">Block Block_0</span>
<div style="left:483.5px;top:205px;width:0.7px;height:33px;background:#6a6a6a;"></div>
<div style="left:483.5px;top:209.5px;width:5px;height:0.7px;background:#6a6a6a;"></div>
<div style="left:483.5px;top:219.6px;width:5px;height:0.7px;background:#6a6a6a;"></div>
<div style="left:483.5px;top:228.6px;width:5px;height:0.7px;background:#6a6a6a;"></div>
<div style="left:483.5px;top:237.8px;width:5px;height:0.7px;background:#6a6a6a;"></div>
<div style="left:496.1px;top:205.2px;width:15.6px;height:9.6px;background:#1a1e26;border:0.8px solid #8196b2;box-sizing:border-box;"></div>
<span style="left:497.7px;top:205.78px;font-size:7.2px;color:#f0f0f0;transform:scaleX(0.768);transform-origin:0 0;">Kreis</span>
<span style="left:497.7px;top:215.88px;font-size:7.2px;color:#f0f0f0;transform:scaleX(0.839);transform-origin:0 0;">Polylinie</span>
<span style="left:497.7px;top:224.88px;font-size:7.2px;color:#f0f0f0;transform:scaleX(0.907);transform-origin:0 0;">Multilinie</span>
<span style="left:497.7px;top:234.08px;font-size:7.2px;color:#f0f0f0;transform:scaleX(0.827);transform-origin:0 0;">Ellipse</span>
<svg style="left:489.500px;top:207.300px" width="6" height="6"><circle cx="2.800" cy="2.800" r="2.300" fill="#1a2088"/><circle cx="2.800" cy="2.800" r="1" fill="#3a44a8"/></svg>
<svg style="left:489.500px;top:216.500px" width="6" height="6"><path d="M1.200 4.600l1.600-1.200L4.600 1.400" stroke="#2a38c0" stroke-width=".8" fill="none" stroke-dasharray="1 .6"/><circle cx="4.800" cy="1.300" r=".6" fill="#a8b4f0"/></svg>
<svg style="left:489.500px;top:225.500px" width="6" height="6"><path d="M1.200 4.600l1.600-1.200L4.600 1.400M2.200 5.200l2.600-2.200" stroke="#2a38c0" stroke-width=".8" fill="none"/><circle cx="4.800" cy="1.300" r=".6" fill="#a8b4f0"/></svg>
<svg style="left:489.500px;top:234.700px" width="6" height="6"><ellipse cx="2.800" cy="2.800" rx="2.600" ry="2" fill="#1a2088"/><circle cx="2.800" cy="2.800" r=".9" fill="#3a44a8"/></svg>
<div style="left:463px;top:248px;width:43px;height:8.5px;background:#585858;"></div>
<div style="left:507.3px;top:248px;width:62px;height:8.5px;background:#454545;"></div>
<span style="left:465.7px;top:248.78px;font-size:7.2px;color:#f4f4f4;transform:scaleX(0.839);transform-origin:0 0;">Eigenschaften</span>
<span style="left:509.6px;top:248.78px;font-size:7.2px;color:#8a8a8a;transform:scaleX(0.859);transform-origin:0 0;">Zwangsbedingungen</span>
<div style="left:463px;top:256.3px;width:158.5px;height:9px;background:#585858;"></div>
<span style="left:465.7px;top:257.98px;font-size:7.2px;color:#f0f0f0;transform:scaleX(0.839);transform-origin:0 0;">Eigenschaft</span>
<span style="left:529.9px;top:257.98px;font-size:7.2px;color:#f0f0f0;transform:scaleX(0.850);transform-origin:0 0;">Wert</span>
<div style="left:525.2px;top:256.3px;width:0.8px;height:9px;background:#3a3a3a;"></div>
<svg style="left:518.500px;top:258.500px" width="4" height="4"><path d="M2 0v3M.5 3.500h3" stroke="#aaa" stroke-width=".7"/></svg>
<div style="left:463px;top:265.3px;width:158.5px;height:191px;background:#2a2a2a;"></div>
<div style="left:463px;top:274.9px;width:158.5px;height:0.9px;background:#5c5c5c;"></div>
<div style="left:463px;top:284.93px;width:158.5px;height:0.9px;background:#5c5c5c;"></div>
<div style="left:463px;top:294.96px;width:158.5px;height:0.9px;background:#5c5c5c;"></div>
<div style="left:463px;top:304.99px;width:158.5px;height:0.9px;background:#5c5c5c;"></div>
<div style="left:463px;top:315.02px;width:158.5px;height:0.9px;background:#5c5c5c;"></div>
<div style="left:463px;top:325.05px;width:158.5px;height:0.9px;background:#5c5c5c;"></div>
<div style="left:463px;top:335.08px;width:158.5px;height:0.9px;background:#5c5c5c;"></div>
<div style="left:463px;top:345.11px;width:158.5px;height:0.9px;background:#5c5c5c;"></div>
<div style="left:463px;top:355.14px;width:158.5px;height:0.9px;background:#5c5c5c;"></div>
<div style="left:463px;top:365.17px;width:158.5px;height:0.9px;background:#5c5c5c;"></div>
<div style="left:463px;top:375.2px;width:158.5px;height:0.9px;background:#5c5c5c;"></div>
<div style="left:463px;top:385.23px;width:158.5px;height:0.9px;background:#5c5c5c;"></div>
<div style="left:463px;top:395.26px;width:158.5px;height:0.9px;background:#5c5c5c;"></div>
<div style="left:463px;top:405.29px;width:158.5px;height:0.9px;background:#5c5c5c;"></div>
<div style="left:463px;top:415.32px;width:158.5px;height:0.9px;background:#5c5c5c;"></div>
<div style="left:463px;top:425.35px;width:158.5px;height:0.9px;background:#5c5c5c;"></div>
<div style="left:463px;top:435.38px;width:158.5px;height:0.9px;background:#5c5c5c;"></div>
<div style="left:463px;top:445.41px;width:158.5px;height:0.9px;background:#5c5c5c;"></div>
<div style="left:525.2px;top:265.3px;width:0.9px;height:191px;background:#5c5c5c;"></div>
<div style="left:621px;top:265.3px;width:0.8px;height:191px;background:#5c5c5c;"></div>
<div style="left:465px;top:269px;width:5px;height:5px;background:#e2e2e2;"></div>
<div style="left:466px;top:271px;width:3px;height:1px;background:#222;"></div>
<div style="left:467px;top:270px;width:1px;height:3px;background:#222;"></div>
<span style="left:472.5px;top:267.88px;font-size:7.2px;color:#ffffff;transform:scaleX(0.863);transform-origin:0 0;font-weight:bold;">Allgemein</span>
<div style="left:465px;top:279px;width:5px;height:5px;background:#e2e2e2;"></div>
<div style="left:466px;top:281px;width:3px;height:1px;background:#222;"></div>
<div style="left:467px;top:280px;width:1px;height:3px;background:#222;"></div>
<span style="left:472.5px;top:277.88px;font-size:7.2px;color:#ffffff;transform:scaleX(0.886);transform-origin:0 0;font-weight:bold;">Stift</span>
<div style="left:465px;top:289px;width:5px;height:5px;background:#e2e2e2;"></div>
<div style="left:466px;top:291px;width:3px;height:1px;background:#222;"></div>
<div style="left:467px;top:290px;width:1px;height:3px;background:#222;"></div>
<span style="left:472.5px;top:287.98px;font-size:7.2px;color:#ffffff;transform:scaleX(0.823);transform-origin:0 0;font-weight:bold;">Füllung</span>
<div style="left:465px;top:299px;width:5px;height:5px;background:#e2e2e2;"></div>
<div style="left:466px;top:301px;width:3px;height:1px;background:#222;"></div>
<div style="left:467px;top:300px;width:1px;height:3px;background:#222;"></div>
<span style="left:472.5px;top:297.98px;font-size:7.2px;color:#ffffff;transform:scaleX(0.858);transform-origin:0 0;font-weight:bold;">3D</span>
<div style="left:465px;top:309px;width:5px;height:5px;background:#e2e2e2;"></div>
<div style="left:466px;top:311px;width:3px;height:1px;background:#222;"></div>
<div style="left:467px;top:310px;width:1px;height:3px;background:#222;"></div>
<span style="left:472.5px;top:307.98px;font-size:7.2px;color:#ffffff;transform:scaleX(0.901);transform-origin:0 0;font-weight:bold;">Metrik</span>
<div style="left:463px;top:456.5px;width:158.5px;height:9px;background:#424242;"></div>
<div style="left:463.5px;top:457px;width:8px;height:8px;background:#505050;"></div>
<div style="left:613.5px;top:457px;width:7.5px;height:8px;background:#505050;"></div>
<div style="left:479.25px;top:457.5px;width:133px;height:7.7px;background:#686868;"></div>
<svg style="left:465.500px;top:459.300px" width="3" height="4"><path d="M3 0v4L0 2z" fill="#e8e8e8"/></svg>
<svg style="left:616px;top:459.300px" width="3" height="4"><path d="M0 0v4l3-2z" fill="#e8e8e8"/></svg>
<div style="left:463px;top:466.3px;width:158.5px;height:15px;background:#2a2a2a;"></div>
<span style="left:464px;top:467.78px;font-size:7.2px;color:#f0f0f0;transform:scaleX(0.853);transform-origin:0 0;">1 von 1 ausgewählt:</span>
<div style="left:625px;top:160.5px;width:175px;height:323px;background:#535353;"></div>
<div style="left:625px;top:160.5px;width:175px;height:10px;background:#585858;"></div>
<div style="left:625px;top:186.8px;width:175px;height:0.8px;background:#5e5e5e;"></div>
<div style="left:624.6px;top:159.7px;width:175.4px;height:0.9px;background:#6a6a6a;"></div>
<span style="left:625.3px;top:161.76px;font-size:7.4px;color:#f0f0f0;transform:scaleX(0.700);transform-origin:0 0;">öcke</span>
<svg style="left:788.500px;top:162.800px" width="3.400" height="4.400"><path d="M.9.400h1.600v2h-1.600zM0 2.400h3.400M1.700 2.400v1.900" stroke="#e8e8e8" stroke-width=".7" fill="none"/></svg>
<svg style="left:795px;top:163.200px" width="3.600" height="3.600"><path d="M.3.300l3 3M3.300.3l-3 3" stroke="#f0f0f0" stroke-width=".9"/></svg>
<div style="left:625.5px;top:173px;width:4.2px;height:10px;background:#3a4a66;border:0.8px solid #7aa4e8;box-sizing:border-box;border-left:none;"></div>
<svg style="left:632px;top:173.8px" width="8" height="8"><path d="M1 1.500h2M1 4h2M1 6.500h2" stroke="#e8e8e8" stroke-width="1"/><path d="M4 1.500h3M4 4h3M4 6.500h3" stroke="#7aa4e8" stroke-width=".8"/></svg>
<svg style="left:642px;top:173.8px" width="10" height="8"><path d="M.5 1.500h2M.5 4h2M.5 6.500h2" stroke="#e8e8e8" stroke-width="1.400"/><path d="M3.500 1.500h6M3.500 4h6M3.500 6.500h6" stroke="#7aa4e8" stroke-width="1.400"/></svg>
<svg style="left:654.500px;top:173.3px" width="10" height="9"><rect x=".5" y=".5" width="9" height="8" fill="#3060c0" stroke="#9cc0f0" stroke-width=".8"/><rect x="3.500" y="2" width="3.500" height="5" fill="#fff"/><rect x="4.500" y="3" width="1.400" height="3" fill="#223"/></svg>
<svg style="left:666.500px;top:173.8px" width="9" height="8"><path d="M1 4.500l2.500 2.500L8 1.500" stroke="#9a9a9a" stroke-width="1.500" fill="none"/></svg>
<svg style="left:678px;top:173.3px" width="9" height="9"><rect x=".5" y=".5" width="5" height="5.500" fill="#e8e8e8"/><rect x="3.500" y="3" width="5" height="5.500" fill="#d8d8d8" stroke="#555" stroke-width=".6"/><path d="M1.500 2h3M1.500 3.500h2" stroke="#555" stroke-width=".5"/></svg>
<svg style="left:689px;top:173.3px" width="9" height="9"><rect x=".5" y=".5" width="5" height="5.500" fill="#8a8a8a"/><rect x="3.500" y="3" width="5" height="5.500" fill="#7a7a7a" stroke="#555" stroke-width=".6"/></svg>
<svg style="left:700.5px;top:173.8px" width="8" height="8"><path d="M1 1l6 6M7 1L1 7" stroke="#d82020" stroke-width="1.800"/></svg>
<svg style="left:711px;top:173.3px" width="9" height="9"><rect x=".5" y=".5" width="5" height="5.500" fill="#e8e8e8"/><rect x="1.200" y="1.200" width="2.500" height="2.500" fill="#d82020"/><rect x="3.500" y="3" width="5" height="5.500" fill="#e8e8e8" stroke="#555" stroke-width=".6"/><rect x="5" y="4.500" width="2.500" height="2.500" fill="#d82020"/></svg>
<svg style="left:723px;top:173.3px" width="8" height="9"><path d="M1 1l1.500 5.500 1.500-1 2 3" stroke="#e8e8e8" stroke-width="1" fill="none"/><path d="M3 4l3.500 1.500-2 2z" fill="#4a80d8"/></svg>
<svg style="left:733.500px;top:173.3px" width="10" height="9"><rect x=".5" y="1" width="3" height="6.500" fill="#e8e8c8"/><circle cx="6.500" cy="4" r="2.300" fill="#30b8d8" stroke="#e8e8e8" stroke-width=".8"/><path d="M8 6l1.500 2" stroke="#e8e8e8" stroke-width="1"/></svg>
<svg style="left:745.500px;top:173.3px" width="9" height="9"><path d="M.5 4.500L4.500.8l4 3.700v4h-8z" fill="#30c8d8"/><rect x="3" y="5" width="3" height="3.500" fill="#f4f4f4"/></svg>
<svg style="left:757px;top:173.3px" width="9" height="9"><path d="M1 1.500l3.500 6M4.500 1.500L1 7.500" stroke="#e8e8e8" stroke-width="1"/><rect x="6" y="1" width="2" height="7" fill="#30c040"/></svg>
<div style="left:627px;top:190.2px;width:15px;height:15.5px;background:#ffffff;border:1.100px solid #161616;box-sizing:border-box;"></div>
<svg style="left:0;top:0" width="800" height="600"><g transform="translate(628.600,191.800) scale(0.0525) translate(-114.500,-215.500)" stroke="#111" stroke-width="14" fill="none"><circle cx="216.800" cy="261.200" r="46.100"/><path d="M115.200 320 L222 241.300 L322.300 434.300 Z"/><path d="M163.300 285 L317.200 439.500 M173.500 276.800 L327.700 430.100" stroke-width="18"/><ellipse cx="280.300" cy="334" rx="97.500" ry="18" transform="rotate(-53.800 280.300 334)"/></g></svg>
<div style="left:625px;top:207.8px;width:21px;height:8.4px;background:#a0c6f4;"></div>
<span style="left:625.6px;top:208.08px;font-size:7.2px;color:#1f386a;transform:scaleX(0.773);transform-origin:0 0;">Block_0</span>
<div style="left:0px;top:484px;width:800px;height:20.3px;background:#464646;"></div>
<div style="left:0px;top:484px;width:800px;height:0.8px;background:#333;"></div>
<div style="left:1.5px;top:487px;width:1px;height:15px;background:#6a6a6a;"></div>
<svg style="left:5px;top:490px" width="10" height="10"><path d="M5 9a4 4 0 1 1 3-6.500" fill="none" stroke="#e06020" stroke-width="1.600"/><circle cx="6" cy="3.500" r="1.600" fill="#f0d030"/><path d="M4 6l3-3.500M5.500 7l3-1" stroke="#f0f0d0" stroke-width=".9"/></svg>
<svg style="left:17px;top:492.300px" width="7" height="7"><path d="M.8.800l5.200 5.200M6 .8L.8 6" stroke="#cc2222" stroke-width="1.700"/></svg>
<svg style="left:27px;top:492px" width="8.500" height="7.500"><rect x=".3" y=".3" width="7.900" height="6.900" fill="#4a78c8"/><rect x=".3" y=".3" width="7.900" height="1.800" fill="#a8c4f0"/><path d="M2.300 2.100v5M4.300 2.100v5M6.300 2.100v5" stroke="#263c78" stroke-width=".7"/></svg>
<span style="left:40px;top:486.97px;font-size:6.7px;color:#f0f0f0;transform:scaleX(0.888);transform-origin:0 0;">Maßstab X</span>
<div style="left:40px;top:494.3px;width:21.25px;height:10px;background:#222222;border:0.8px solid #787878;box-sizing:border-box;overflow:hidden;"></div>
<span style="left:42.3px;top:496.01px;font-size:6.8px;color:#f4f4f4;">1</span>
<div style="left:61.2px;top:494.3px;width:6.3px;height:10px;background:#363636;border:0.8px solid #5a5a5a;border-left:none;box-sizing:border-box;"></div>
<svg style="left:63.45px;top:496.300px" width="2.600" height="6.400"><path d="M0 1.700h2.600L1.300 0zM0 4.700h2.600L1.300 6.400z" fill="#e8e8e8"/></svg>
<span style="left:71.25px;top:486.97px;font-size:6.7px;color:#f0f0f0;transform:scaleX(0.891);transform-origin:0 0;">Maßstab Y</span>
<div style="left:72px;top:494.3px;width:20.5px;height:10px;background:#222222;border:0.8px solid #787878;box-sizing:border-box;overflow:hidden;"></div>
<span style="left:74.3px;top:496.01px;font-size:6.8px;color:#f4f4f4;">1</span>
<div style="left:92.5px;top:494.3px;width:6.25px;height:10px;background:#363636;border:0.8px solid #5a5a5a;border-left:none;box-sizing:border-box;"></div>
<svg style="left:94.725px;top:496.300px" width="2.600" height="6.400"><path d="M0 1.700h2.600L1.300 0zM0 4.700h2.600L1.300 6.400z" fill="#e8e8e8"/></svg>
<span style="left:102.5px;top:486.97px;font-size:6.7px;color:#f0f0f0;transform:scaleX(0.898);transform-origin:0 0;">Maßstab Z</span>
<div style="left:103px;top:494.3px;width:21px;height:10px;background:#222222;border:0.8px solid #787878;box-sizing:border-box;overflow:hidden;"></div>
<span style="left:105.3px;top:496.01px;font-size:6.8px;color:#f4f4f4;">1</span>
<div style="left:124px;top:494.3px;width:6.3px;height:10px;background:#363636;border:0.8px solid #5a5a5a;border-left:none;box-sizing:border-box;"></div>
<svg style="left:126.25px;top:496.300px" width="2.600" height="6.400"><path d="M0 1.700h2.600L1.300 0zM0 4.700h2.600L1.300 6.400z" fill="#e8e8e8"/></svg>
<span style="left:133.75px;top:486.97px;font-size:6.7px;color:#f0f0f0;transform:scaleX(0.859);transform-origin:0 0;">Größe X</span>
<div style="left:134.25px;top:494.3px;width:29.5px;height:10px;background:#222222;border:0.8px solid #787878;box-sizing:border-box;overflow:hidden;"></div>
<span style="left:136.55px;top:496.01px;font-size:6.8px;color:#f4f4f4;transform:scaleX(0.933);transform-origin:0 0;">156,43 m</span>
<span style="left:165px;top:486.97px;font-size:6.7px;color:#f0f0f0;transform:scaleX(0.843);transform-origin:0 0;">Größe Y</span>
<div style="left:165.75px;top:494.3px;width:29.25px;height:10px;background:#222222;border:0.8px solid #787878;box-sizing:border-box;overflow:hidden;"></div>
<span style="left:168.05px;top:496.01px;font-size:6.8px;color:#f4f4f4;transform:scaleX(0.926);transform-origin:0 0;">156,23 m</span>
<span style="left:196.25px;top:486.97px;font-size:6.7px;color:#f0f0f0;transform:scaleX(0.902);transform-origin:0 0;">Größe Z</span>
<div style="left:197px;top:494.3px;width:28px;height:10px;background:#222222;border:0.8px solid #787878;box-sizing:border-box;overflow:hidden;"></div>
<span style="left:199.3px;top:496.01px;font-size:6.8px;color:#f4f4f4;transform:scaleX(0.894);transform-origin:0 0;">0 mm</span>
<span style="left:228px;top:486.97px;font-size:6.7px;color:#f0f0f0;transform:scaleX(0.811);transform-origin:0 0;">Pos X</span>
<div style="left:228px;top:494.3px;width:28.25px;height:10px;background:#222222;border:0.8px solid #787878;box-sizing:border-box;overflow:hidden;"></div>
<span style="left:230.3px;top:496.01px;font-size:6.8px;color:#f4f4f4;transform:scaleX(0.863);transform-origin:0 0;">145 mm</span>
<span style="left:259.25px;top:486.97px;font-size:6.7px;color:#f0f0f0;transform:scaleX(0.774);transform-origin:0 0;">Pos Y</span>
<div style="left:259.5px;top:494.3px;width:28.5px;height:10px;background:#222222;border:0.8px solid #787878;box-sizing:border-box;overflow:hidden;"></div>
<span style="left:261.8px;top:496.01px;font-size:6.8px;color:#f4f4f4;transform:scaleX(0.863);transform-origin:0 0;">100 mm</span>
<span style="left:290.5px;top:486.97px;font-size:6.7px;color:#f0f0f0;transform:scaleX(0.786);transform-origin:0 0;">Pos Z</span>
<div style="left:290.5px;top:494.3px;width:29px;height:10px;background:#222222;border:0.8px solid #787878;box-sizing:border-box;overflow:hidden;"></div>
<span style="left:292.8px;top:496.01px;font-size:6.8px;color:#f4f4f4;transform:scaleX(0.894);transform-origin:0 0;">0 mm</span>
<span style="left:321.75px;top:486.97px;font-size:6.7px;color:#f0f0f0;transform:scaleX(0.910);transform-origin:0 0;">Delta X</span>
<div style="left:322px;top:494.3px;width:28.5px;height:10px;background:#222222;border:0.8px solid #787878;box-sizing:border-box;overflow:hidden;"></div>
<span style="left:324.3px;top:496.01px;font-size:6.8px;color:#f4f4f4;transform:scaleX(0.894);transform-origin:0 0;">0 mm</span>
<span style="left:353px;top:486.97px;font-size:6.7px;color:#f0f0f0;transform:scaleX(0.915);transform-origin:0 0;">Delta Y</span>
<div style="left:353.25px;top:494.3px;width:28.5px;height:10px;background:#222222;border:0.8px solid #787878;box-sizing:border-box;overflow:hidden;"></div>
<span style="left:355.55px;top:496.01px;font-size:6.8px;color:#f4f4f4;transform:scaleX(0.897);transform-origin:0 0;">0 mm</span>
<span style="left:384.25px;top:486.97px;font-size:6.7px;color:#f0f0f0;transform:scaleX(0.938);transform-origin:0 0;">Delta Z</span>
<div style="left:384.5px;top:494.3px;width:28px;height:10px;background:#222222;border:0.8px solid #787878;box-sizing:border-box;overflow:hidden;"></div>
<span style="left:386.8px;top:496.01px;font-size:6.8px;color:#f4f4f4;transform:scaleX(0.894);transform-origin:0 0;">0 mm</span>
<span style="left:415.5px;top:486.97px;font-size:6.7px;color:#f0f0f0;transform:scaleX(0.895);transform-origin:0 0;">Drehg X</span>
<div style="left:415.5px;top:494.3px;width:21.5px;height:10px;background:#222222;border:0.8px solid #787878;box-sizing:border-box;overflow:hidden;"></div>
<span style="left:417.8px;top:496.01px;font-size:6.8px;color:#f4f4f4;">0</span>
<div style="left:436.8px;top:494.3px;width:6px;height:10px;background:#363636;border:0.8px solid #5a5a5a;border-left:none;box-sizing:border-box;"></div>
<svg style="left:438.9px;top:496.300px" width="2.600" height="6.400"><path d="M0 1.700h2.600L1.300 0zM0 4.700h2.600L1.300 6.400z" fill="#e8e8e8"/></svg>
<span style="left:446.75px;top:486.97px;font-size:6.7px;color:#f0f0f0;transform:scaleX(0.869);transform-origin:0 0;">Drehg Y</span>
<div style="left:446.75px;top:494.3px;width:21.45px;height:10px;background:#222222;border:0.8px solid #787878;box-sizing:border-box;overflow:hidden;"></div>
<span style="left:449.05px;top:496.01px;font-size:6.8px;color:#f4f4f4;">0</span>
<div style="left:468px;top:494.3px;width:6.25px;height:10px;background:#363636;border:0.8px solid #5a5a5a;border-left:none;box-sizing:border-box;"></div>
<svg style="left:470.225px;top:496.300px" width="2.600" height="6.400"><path d="M0 1.700h2.600L1.300 0zM0 4.700h2.600L1.300 6.400z" fill="#e8e8e8"/></svg>
<span style="left:478px;top:486.97px;font-size:6.7px;color:#f0f0f0;transform:scaleX(0.909);transform-origin:0 0;">Drehg Z</span>
<div style="left:478px;top:494.3px;width:21.5px;height:10px;background:#222222;border:0.8px solid #787878;box-sizing:border-box;overflow:hidden;"></div>
<span style="left:480.3px;top:496.01px;font-size:6.8px;color:#f4f4f4;">0</span>
<div style="left:499.3px;top:494.3px;width:6.2px;height:10px;background:#363636;border:0.8px solid #5a5a5a;border-left:none;box-sizing:border-box;"></div>
<svg style="left:501.5px;top:496.300px" width="2.600" height="6.400"><path d="M0 1.700h2.600L1.300 0zM0 4.700h2.600L1.300 6.400z" fill="#e8e8e8"/></svg>
<span style="left:509.25px;top:486.97px;font-size:6.7px;color:#f0f0f0;transform:scaleX(0.941);transform-origin:0 0;">Delta Abst</span>
<div style="left:509.25px;top:494.3px;width:28.75px;height:10px;background:#222222;border:0.8px solid #787878;box-sizing:border-box;overflow:hidden;"></div>
<span style="left:511.55px;top:496.01px;font-size:6.8px;color:#f4f4f4;transform:scaleX(0.897);transform-origin:0 0;">0 mm</span>
<span style="left:540px;top:486.97px;font-size:6.7px;color:#f0f0f0;transform:scaleX(0.911);transform-origin:0 0;">Delta Wink</span>
<div style="left:540.5px;top:494.3px;width:21.25px;height:10px;background:#222222;border:0.8px solid #787878;box-sizing:border-box;overflow:hidden;"></div>
<span style="left:542.8px;top:496.01px;font-size:6.8px;color:#f4f4f4;">0</span>
<div style="left:561.6px;top:494.3px;width:6.4px;height:10px;background:#363636;border:0.8px solid #5a5a5a;border-left:none;box-sizing:border-box;"></div>
<svg style="left:563.9px;top:496.300px" width="2.600" height="6.400"><path d="M0 1.700h2.600L1.300 0zM0 4.700h2.600L1.300 6.400z" fill="#e8e8e8"/></svg>
<svg style="left:574.72px;top:491.52px" width="7.56" height="7.56" viewBox="0 0 9 9"><rect x="3" y="1" width="5" height="3.500" fill="#e8e8e8"/><rect x="1" y="4" width="5" height="3.500" fill="none" stroke="#e8e8e8" stroke-width=".9"/></svg>
<svg style="left:586.22px;top:491.52px" width="7.56" height="7.56" viewBox="0 0 9 9"><rect x=".8" y="1" width="3.500" height="3" fill="none" stroke="#e8e8e8" stroke-width=".9"/><circle cx="6" cy="6" r="2" fill="none" stroke="#e8e8e8" stroke-width=".9"/><path d="M3 3l3 3" stroke="#e8e8e8" stroke-width=".8"/></svg>
<svg style="left:597.72px;top:491.52px" width="7.56" height="7.56" viewBox="0 0 9 9"><path d="M1 3c2-2 4-2 5 1M5 3l2 4" stroke="#d8d8d8" stroke-width="1" fill="none"/><circle cx="2" cy="3" r="1" fill="#5f9fe8"/></svg>
<div style="left:605.3px;top:487.5px;width:0.7px;height:14px;background:#666;"></div>
<div style="left:608.5px;top:489.7px;width:10px;height:10.6px;background:#4f78b8;border:0.7px solid #9cc0f0;box-sizing:border-box;"></div>
<svg style="left:610.64px;top:491.94px" width="6.72" height="6.72" viewBox="0 0 8 8"><path d="M1 1h6v6h-6z" fill="#20a040"/><path d="M1 1l6 6" stroke="#d8ffd8" stroke-width=".9"/><path d="M1 1h6v6h-6z" fill="none" stroke="#0a5a20" stroke-width=".6"/></svg>
<svg style="left:621.72px;top:491.52px" width="7.56" height="7.56" viewBox="0 0 9 9"><path d="M1 1v6.500h6.500" stroke="#e8e8e8" stroke-width="1" fill="none"/><path d="M2.500 6l4-4.500" stroke="#30b850" stroke-width="1.300"/><path d="M4 1h3v3" stroke="#e8e8e8" stroke-width=".8" fill="none"/></svg>
<svg style="left:631.72px;top:491.52px" width="7.56" height="7.56" viewBox="0 0 9 9"><path d="M1 1v6.500h6.500" stroke="#e8e8e8" stroke-width="1" fill="none"/><path d="M2 6.500V2.500l4.500 4z" fill="#28b048"/></svg>
<svg style="left:641.72px;top:491.52px" width="7.56" height="7.56" viewBox="0 0 9 9"><rect x="1" y="1.500" width="7" height="4" rx="1" fill="#28b048"/><path d="M2 6v2M7 6v2" stroke="#e8e8e8" stroke-width="1"/><path d="M3 3.500h3" stroke="#d8ffd8" stroke-width=".9"/></svg>
<div style="left:652.3px;top:487.5px;width:0.7px;height:14px;background:#666;"></div>
<svg style="left:656.72px;top:491.52px" width="7.56" height="7.56" viewBox="0 0 9 9"><path d="M1 3h4v-2l3 3.500-3 3.500v-2h-4z" fill="#30b850" transform="scale(.8) translate(0 1)"/><path d="M1 1v3" stroke="#e8e8e8" stroke-width=".9"/></svg>
<svg style="left:667.22px;top:491.52px" width="7.56" height="7.56" viewBox="0 0 9 9"><path d="M1.500 1.500l5 5M6.500 1.500l-5 5" stroke="#d03030" stroke-width="1"/><path d="M4 0v2M4 6v2" stroke="#e8e8e8" stroke-width=".7"/><circle cx="6.500" cy="2" r=".9" fill="#30b850"/></svg>
<svg style="left:678.22px;top:491.52px" width="7.56" height="7.56" viewBox="0 0 9 9"><path d="M1 7l3-5.500 3 5.500z" fill="#d03030"/><path d="M4 0v2" stroke="#e8e8e8" stroke-width=".8"/><circle cx="4" cy="5" r=".8" fill="#ffd0d0"/></svg>
<svg style="left:688.72px;top:491.52px" width="7.56" height="7.56" viewBox="0 0 9 9"><path d="M1 7.500l1.500-3h3l1.500 3z" fill="#c8c8c8"/><circle cx="4" cy="2.800" r="1.700" fill="none" stroke="#e0e0e0" stroke-width=".9"/><path d="M1 7.500h6" stroke="#eee" stroke-width=".8"/></svg>
<svg style="left:699.72px;top:491.52px" width="7.56" height="7.56" viewBox="0 0 9 9"><rect x=".8" y=".8" width="7" height="7" fill="#384a78" stroke="#e8e8e8" stroke-width=".8"/><path d="M4.300.8v7M.8 4.300h7" stroke="#d03030" stroke-width=".9"/><rect x="3.300" y="3.300" width="2" height="2" fill="#e8e8e8"/></svg>
<svg style="left:710.22px;top:491.52px" width="7.56" height="7.56" viewBox="0 0 9 9"><rect x=".8" y=".8" width="7" height="7" fill="#d02828" stroke="#e8e8e8" stroke-width=".8"/><rect x="3" y="3" width="2.600" height="2.600" fill="#f0d030"/></svg>
<svg style="left:721.22px;top:491.52px" width="7.56" height="7.56" viewBox="0 0 9 9"><rect x=".8" y="2" width="5.500" height="5.500" fill="#5a4a38" stroke="#e8e8e8" stroke-width=".8"/><path d="M3 6l4.500-5" stroke="#e88030" stroke-width="1.200"/><circle cx="7.300" cy="1.300" r=".9" fill="#d03030"/></svg>
<svg style="left:731.72px;top:491.52px" width="7.56" height="7.56" viewBox="0 0 9 9"><rect x="1" y="3" width="4" height="4" fill="none" stroke="#c8c8c8" stroke-width=".8"/><rect x="3.500" y="1" width="4" height="4" fill="none" stroke="#c8c8c8" stroke-width=".8"/><circle cx="7" cy="1.500" r=".9" fill="#8a9ad8"/></svg>
<svg style="left:742.22px;top:491.52px" width="7.56" height="7.56" viewBox="0 0 9 9"><path d="M1 2.500h4.500" stroke="#e8e8e8" stroke-width="1.200"/><circle cx="2" cy="2.500" r="1.200" fill="#d03030"/><circle cx="6" cy="5.500" r="1.800" fill="none" stroke="#e8e8e8" stroke-width=".9"/><circle cx="6" cy="5.500" r=".7" fill="#d03030"/></svg>
<svg style="left:753.22px;top:491.52px" width="7.56" height="7.56" viewBox="0 0 9 9"><path d="M1 6.500l5.500-4" stroke="#e8e8e8" stroke-width="1.200"/><circle cx="6.500" cy="2.300" r="1.300" fill="#d03030"/><rect x=".8" y="5.500" width="2.500" height="2" fill="#d03030"/></svg>
<svg style="left:763.72px;top:491.52px" width="7.56" height="7.56" viewBox="0 0 9 9"><rect x="1" y="3.500" width="4" height="4" fill="none" stroke="#d8d8d8" stroke-width=".8"/><path d="M3 3.500v-2.500h4.500v4.500h-2.500" fill="none" stroke="#d8d8d8" stroke-width=".8"/><circle cx="6.800" cy="1.800" r=".9" fill="#8a9ad8"/></svg>
<svg style="left:774.72px;top:491.52px" width="7.56" height="7.56" viewBox="0 0 9 9"><path d="M1 7.500h6.500V1.500" stroke="#e8e8e8" stroke-width="1.100" fill="none"/><path d="M1 7.500h6.500" stroke="#d03030" stroke-width="1.400"/></svg>
<svg style="left:785.72px;top:491.52px" width="7.56" height="7.56" viewBox="0 0 9 9"><rect x="1" y="1" width="6.500" height="6.500" fill="none" stroke="#d03030" stroke-width="1"/><path d="M1 1l6.500 6.500M7.500 1L1 7.500" stroke="#e8e8e8" stroke-width=".8"/></svg>
<div style="left:0px;top:504.3px;width:800px;height:13.5px;background:#434343;"></div>
<span style="left:3px;top:507.68px;font-size:7.2px;color:#f0f0f0;transform:scaleX(0.863);transform-origin:0 0;">Bearbeiten Sie das/die ausgewählte(n) Objekt(e)</span>
<span style="left:542.8px;top:510.43px;font-size:6.6px;color:#f0f0f0;transform:scaleX(0.846);transform-origin:0 0;">FANG</span>
<span style="left:561.9px;top:510.43px;font-size:6.6px;color:#f0f0f0;transform:scaleX(0.808);transform-origin:0 0;">GEO</span>
<div style="left:588px;top:507.6px;width:38.25px;height:9.8px;background:#222222;border:0.8px solid #787878;box-sizing:border-box;"></div>
<span style="left:590.3px;top:509.18px;font-size:7.2px;color:#f4f4f4;transform:scaleX(0.811);transform-origin:0 0;">282,48 mm</span>
<svg style="left:583.5px;top:508.500px" width="4" height="9"><rect x=".5" y=".5" width="3" height="3" fill="none" stroke="#d0d0d0" stroke-width=".7"/><path d="M1 5.500l2 2.500M3 5.500l-2 2.500" stroke="#d0d0d0" stroke-width=".6"/></svg>
<div style="left:638.75px;top:507.6px;width:38.25px;height:9.8px;background:#222222;border:0.8px solid #787878;box-sizing:border-box;"></div>
<span style="left:641.05px;top:509.18px;font-size:7.2px;color:#f4f4f4;transform:scaleX(0.840);transform-origin:0 0;">141,38 mm</span>
<svg style="left:633.5px;top:508.500px" width="4" height="9"><rect x=".5" y=".5" width="3" height="3" fill="none" stroke="#d0d0d0" stroke-width=".7"/><path d="M1 5.500l2 2.500M3 5.500l-2 2.500" stroke="#d0d0d0" stroke-width=".6"/></svg>
<div style="left:688.75px;top:507.6px;width:38.75px;height:9.8px;background:#383838;border:0.8px solid #787878;box-sizing:border-box;"></div>
<span style="left:691.05px;top:509.18px;font-size:7.2px;color:#8a8a8a;transform:scaleX(0.858);transform-origin:0 0;">0 mm</span>
<svg style="left:684px;top:508.500px" width="4" height="9"><rect x=".5" y=".5" width="3" height="3" fill="none" stroke="#d0d0d0" stroke-width=".7"/><path d="M1 5.500l2 2.500M3 5.500l-2 2.500" stroke="#d0d0d0" stroke-width=".6"/></svg>
<span style="left:731.75px;top:508.18px;font-size:7.2px;color:#f0f0f0;transform:scaleX(0.833);transform-origin:0 0;">73%</span>
<span style="left:761.25px;top:508.18px;font-size:7.2px;color:#f0f0f0;transform:scaleX(0.763);transform-origin:0 0;">14:44</span>
<div style="left:0px;top:517px;width:800px;height:1px;background:#2a2a2a;"></div>
<div style="left:0px;top:518px;width:800px;height:1px;background:#8c8c8c;"></div>
<div style="left:424.2px;top:159.8px;width:0.9px;height:6px;background:#46c046;"></div>
<div style="left:0.5px;top:267.8px;width:6.5px;height:0.9px;background:#5f8c5f;"></div>
</div></body></html>
